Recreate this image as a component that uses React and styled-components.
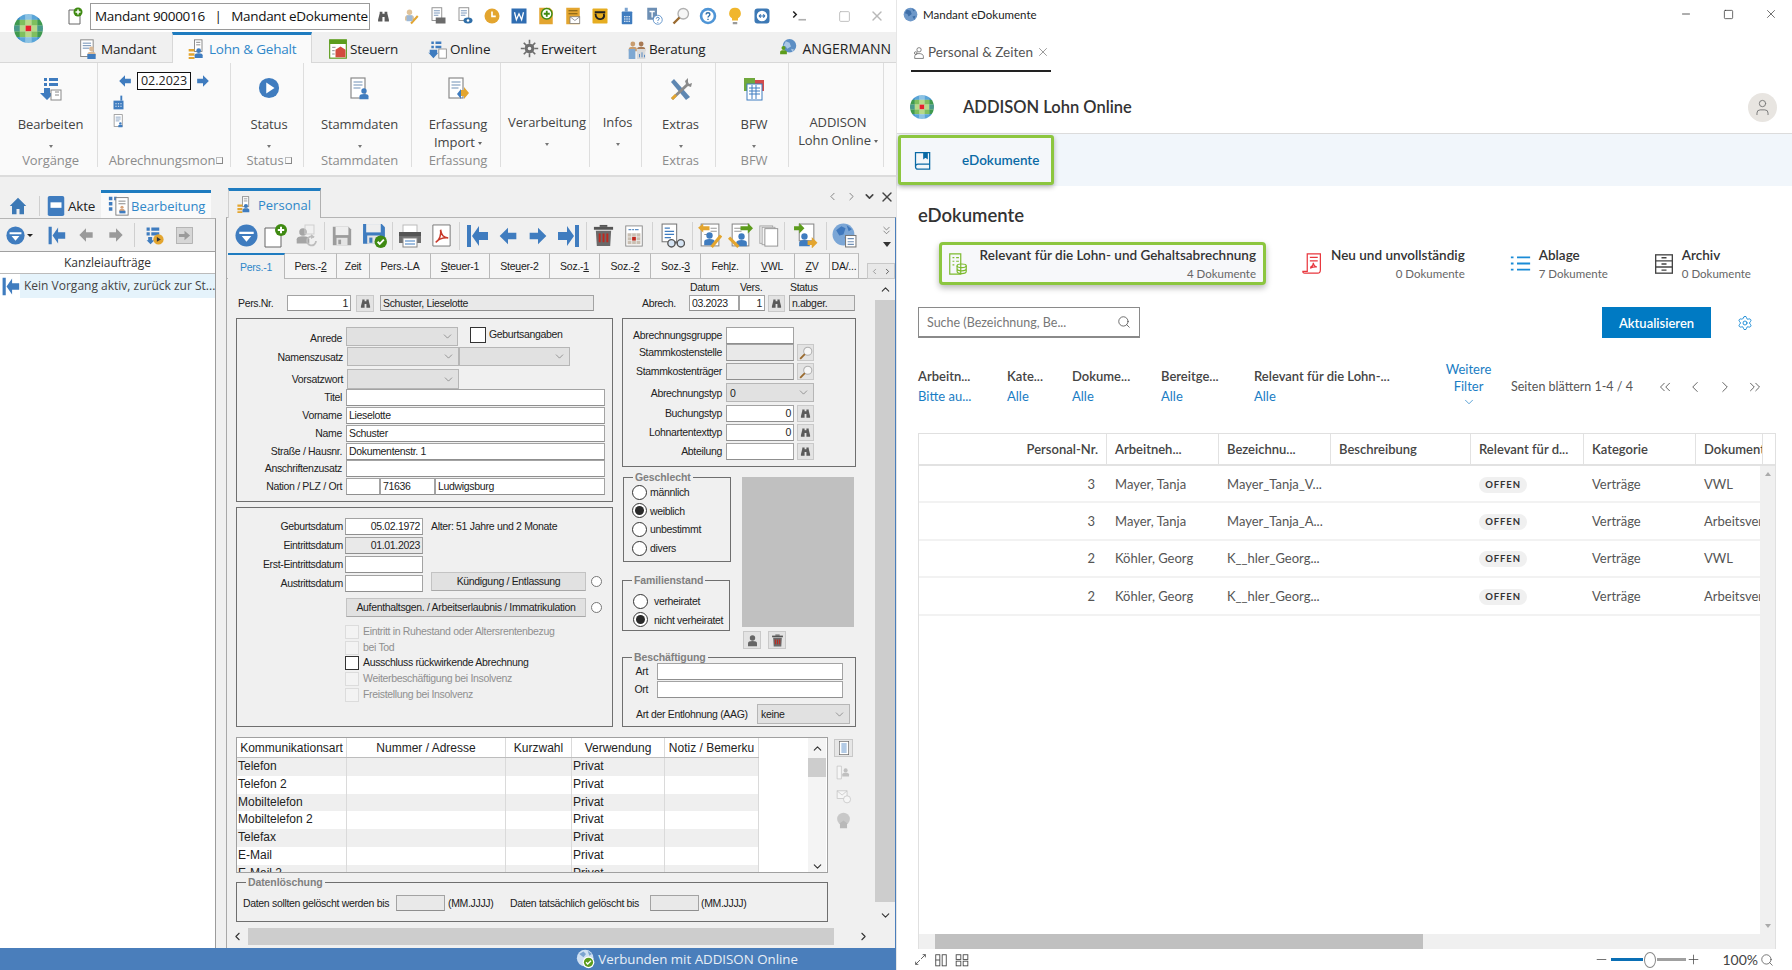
import React, { useId } from 'react';
import styled, { createGlobalStyle } from 'styled-components';
import { Search, Settings, ChevronsLeft, ChevronsRight, ChevronLeft, ChevronRight, ChevronDown, ChevronUp, ChevronsDown, X, User, Minus, Square, Plus } from 'lucide-react';

const seg = `"Open Sans","Noto Sans",sans-serif`;
const ms = `"Liberation Sans",Arial,sans-serif`;
const fira = `Lato,"Noto Sans",sans-serif`;
const B = '#3f7cbf', G = '#9a9a9a', O = '#e3a52f', GR = '#3f8a12';

const Global = createGlobalStyle`
  html, body { margin: 0; padding: 0; background: #fff; overflow: hidden; }
  * { box-sizing: border-box; }
`;

/* ---------- icons ---------- */
const Pers = ({ x = 12, y = 10, c = B, s = 1 }) => (
  <g transform={`translate(${x} ${y}) scale(${s})`}>
    <circle cx="0" cy="0" r="3.6" fill={c} />
    <path d="M-6 11V7c0-2 2-3 6-3s6 1 6 3v4z" fill={c} />
  </g>
);
const Doc = ({ x = 4, y = 1, w = 14, h = 20, c = '#8a8a8a' }) => (
  <g>
    <rect x={x} y={y} width={w} height={h} fill="#fff" stroke={c} strokeWidth="1.2" />
    <path d={`M${x + 2.5} ${y + 4}h${w - 5}M${x + 2.5} ${y + 7}h${w - 5}M${x + 2.5} ${y + 10}h${w - 7}`} stroke="#6f8fb5" strokeWidth="1.2" />
  </g>
);
const Floppy = ({ c, slot }) => (
  <g>
    <path d="M2 2h17l3 3v17H2z" fill={c} />
    <rect x="5" y="2" width="14" height="9" fill="#eeeeee" />
    <rect x="6" y="14" width="12" height="8" fill="#e4e4e4" />
    <rect x="8" y="16" width="3" height="5" fill={slot} />
  </g>
);
const ICONS = {
  binoc: <path fill="#5a5a5a" d="M5 3h5v4h4V3h5v3l3 12v3h-8v-8h-4v8H2v-3L5 6z" />,
  personEdit: <g><Pers x={10} y={7} c="#e0c39a" /><path d="M11 21l9-10 2 2-9 10z" fill={O} /><path d="M6 11h8v8H6z" fill="#9db8d6" /></g>,
  docPrint: <g><Doc x={4} y={1} w={13} h={17} /><rect x="9" y="14" width="13" height="8" fill="#6b6b6b" /></g>,
  docEye: <g><Doc x={4} y={1} w={13} h={17} /><ellipse cx="16" cy="18" rx="6" ry="4" fill="#2f6ea8" /><circle cx="16" cy="18" r="1.7" fill="#fff" /></g>,
  clock: <g><circle cx="12" cy="12" r="10" fill={O} /><path d="M12 6v6.500h5" stroke="#fff" strokeWidth="2.2" fill="none" /></g>,
  word: <g><rect x="2" y="2" width="20" height="20" fill="#2f6db2" /><path d="M6 7l2.500 10L12 9l3.500 8L18 7" stroke="#fff" strokeWidth="1.7" fill="none" /></g>,
  notePlus: <g><path d="M3 1h14l4 4v18H3z" fill={O} /><circle cx="13" cy="9" r="7" fill="#fff" stroke={GR} strokeWidth="2" /><path d="M13 5v8M9 9h8" stroke={GR} strokeWidth="2.4" /></g>,
  noteMail: <g><rect x="3" y="1" width="18" height="22" fill={O} /><path d="M6 5h12M6 9h12" stroke="#7a5a10" strokeWidth="1.4" /><rect x="8" y="13" width="13" height="9" fill="#fff" stroke="#777" /><path d="M8 13l6.500 5 6.500-5" fill="none" stroke="#777" /></g>,
  post: <g><rect x="2" y="2" width="20" height="20" rx="1" fill="#e6ad21" /><path d="M6 9c0 6 4 8 8 7 3-1 4-4 3-7M5 7h14" stroke="#222" strokeWidth="2.4" fill="none" /></g>,
  calc: <g><path d="M9 1h4v5h-4z" fill="#7ba3cf" /><rect x="5" y="6" width="14" height="17" rx="1" fill={B} /><path d="M8 13h2M11 13h2M14 13h2M8 16h2M11 16h2M14 16h2M8 19h2M11 19h2M14 19h2" stroke="#fff" strokeWidth="1.6" /></g>,
  helpDoc: <g><rect x="3" y="1" width="13" height="16" fill="#6d8fb4" /><path d="M6 6h7M9.500 6v8" stroke="#fff" strokeWidth="1.8" /><circle cx="17" cy="17" r="6" fill="#fff" stroke={B} /><path d="M15 15.500c0-2.400 4-2.400 4 0 0 1.500-2 1.400-2 3M17 20v1" stroke={B} strokeWidth="1.3" fill="none" /></g>,
  mag: <g><circle cx="15" cy="9" r="7" fill="#f6f6f6" stroke="#b0b0b0" strokeWidth="1.8" /><path d="M10 14l-8 8" stroke="#9a6a2f" strokeWidth="3.2" /></g>,
  helpCircle: <g><circle cx="12" cy="12" r="11" fill="#4f95d6" /><circle cx="12" cy="12" r="7.500" fill="#fff" /><path d="M9.500 10c0-3.200 5-3.200 5 0 0 2-2.500 2-2.500 4M12 15.500v1.800" stroke="#2f6ea8" strokeWidth="1.8" fill="none" /></g>,
  bulb: <g><path d="M12 1a7.500 7.500 0 0 0-4 14v3h8v-3a7.500 7.500 0 0 0-4-14z" fill="#f0b62c" /><path d="M9 20h6v3H9z" fill="#9a9a9a" /></g>,
  tv: <g><rect x="2" y="2" width="20" height="20" rx="4" fill="#3d79b5" /><circle cx="12" cy="12" r="7" fill="#fff" /><path d="M8 12h8M8 12l2.500-2.200M8 12l2.500 2.200M16 12l-2.500-2.200M16 12l-2.500 2.200" stroke="#3d79b5" strokeWidth="1.5" fill="none" /></g>,
  cmd: <g><path d="M3 6l4 4-4 4" stroke="#222" strokeWidth="2" fill="none" /><path d="M10 17h10" stroke="#b0b0b0" strokeWidth="2.2" /></g>,
  mandant: <g><Doc x={2} y={1} w={15} h={20} /><Pers x={15} y={12} c="#d8b896" s={0.8} /><path d="M10 24v-6h10v6z" fill={B} /></g>,
  lohn: <g><rect x="9" y="1" width="9" height="14" fill="#fff" stroke="#777" /><path d="M11 4h5M11 7h5" stroke="#777" /><path d="M2 12h7v3H2zM2 17h7v3H2zM2 21.500h7V24H2z" fill={O} /><Pers x={14} y={14} c={B} s={0.8} /></g>,
  steuern: <g><rect x="2" y="1" width="20" height="22" fill="#fff" stroke="#5c9c1c" strokeWidth="1.4" /><rect x="2" y="1" width="20" height="5" fill="#5c9c1c" /><path d="M9 13l6-4 6 4v9H9z" fill="#d24b3e" /><path d="M5 10h4M5 14h3M5 18h3" stroke="#777" /></g>,
  online: <g><path d="M4 3h3v3H4zM4 8h3v3H4zM9 3h7v3H9zM9 8h7v3H9z" fill={B} /><path d="M2 13h9v4l2-1-6.500 7L0 16l2 1z" fill={B} /><rect x="13" y="12" width="9" height="11" fill="#fff" stroke="#888" /></g>,
  gear: <g fill="#6e6e6e"><circle cx="12" cy="12" r="4.200" fill="none" stroke="#6e6e6e" strokeWidth="3.800" /><path d="M11 1h2v5h-2zM11 18h2v5h-2zM1 11h5v2H1zM18 11h5v2h-5zM4 5.500L5.500 4l3.500 3.500L7.500 9zM15 16.500l1.500-1.500 3.500 3.500-1.500 1.500zM4 18.500L7.500 15 9 16.500 5.500 20zM15 7.500L18.500 4 20 5.500 16.500 9z" /></g>,
  berat: <g><Pers x={7} y={6} c="#c99c6e" s={0.8} /><Pers x={17} y={6} c="#a87a55" s={0.8} /><path d="M2 12h8v12H2z" fill="#7ea8d2" /><path d="M12 12h10v12H12z" fill="#dadada" /><path d="M15 22v-4M18 22v-6M21 22v-3" stroke={B} /></g>,
  angerm: <g><circle cx="14" cy="9" r="9" fill="#5d8fc4" /><path d="M9 3l5 2 2 5-5 3-2-3-3-1zM16 13l4 1-2 4z" fill="#a9c6e4" /><Pers x={6} y={12} c="#5c9c1c" s={0.75} /></g>,
  globe: <g><circle cx="12" cy="12" r="11" fill="#6e98c9" /><path d="M6 4l6 2 2 5-5 4-2-4-4-1zM15 15l5-1-2 6zM14 2l5 3-2 2z" fill="#3d6ea8" /></g>,
  listDown: <g><path d="M5 1h3v3H5zM10 1h9v3h-9zM5 6h3v3H5zM10 6h9v3h-9z" fill={B} /><path d="M5 11h6v5h4l-7 7-7-7h4z" fill={B} /><rect x="12" y="13" width="10" height="10" fill="#fff" stroke="#888" /><path d="M16 15h4M16 18h4" stroke="#888" /></g>,
  play: <g><circle cx="12" cy="12" r="11" fill={B} /><path d="M9 6l9 6-9 6z" fill="#fff" /></g>,
  stamm: <g><Doc x={3} y={1} w={14} h={20} /><Pers x={16} y={14} c={B} s={0.75} /></g>,
  erfass: <g><Doc x={3} y={1} w={14} h={20} /><path d="M9 15h6v-3l-4 5 4 5v-3h3v-4z" fill={B} /><path d="M15 13h3v-3l5 6-5 6v-3h-3z" fill={O} /></g>,
  tools: <g><path d="M5 2l-3 3 15 18 4-3z" fill="#5e87b2" /><path d="M19 1l-3 3 1 3L2 21l2 2L19 9l3 1 1-4-3 1-1-2z" fill="#8a8a8a" /><path d="M2 21l4-4 2 2-4 4z" fill={O} /></g>,
  bfw: <g><rect x="2" y="1" width="11" height="13" fill="#70a83c" /><rect x="13" y="3" width="9" height="11" fill="#d34b4b" /><rect x="5" y="7" width="15" height="16" fill="#fff" stroke={B} /><path d="M7 11h11M7 14h11M7 17h11M10 8v14M14 8v14" stroke={B} /></g>,
  small1: <g><path d="M15 1h3v8h-3z" fill={B} /><rect x="4" y="9" width="16" height="14" fill={B} /><path d="M7 14h2M11 14h2M15 14h2M7 18h2M11 18h2M15 18h2" stroke="#fff" strokeWidth="1.4" /></g>,
  small2: <g><Doc x={5} y={1} w={13} h={19} /><Pers x={15} y={15} c={B} s={0.55} /></g>,
  home: <path d="M12 1L1 12h3v11h6v-7h4v7h6V12h3z" fill="#3d79b5" />,
  akte: <g><rect x="3" y="1" width="18" height="22" rx="2" fill={B} /><rect x="6" y="8" width="12" height="6" fill="#fff" /></g>,
  bearb: <g><path d="M1 2h4v4H1zM7 2h3v4H7zM1 8h4v4H1zM1 14h4v4H1z" fill={B} /><rect x="9" y="3" width="14" height="20" fill="#fff" stroke="#777" /><path d="M12 7h8M12 10h8" stroke="#777" /><Pers x={16} y={14} c="#d8a37a" s={0.5} /><rect x="13" y="18" width="7" height="3" fill={B} /></g>,
  filter: <g><circle cx="12" cy="12" r="11.500" fill={B} /><path d="M4.500 8h15v2.500h-15zM7 12.500h10l-5 6z" fill="#fff" /></g>,
  first: <path d="M2 1h4v22H2zM23 8h-9V2L7 12l7 10v-6h9z" fill={B} />,
  left: c => <path d="M22 8H12V2L2 12l10 10v-6h10z" fill={c} />,
  right: c => <path d="M2 8h10V2l10 10-10 10v-6H2z" fill={c} />,
  last: <path d="M22 1h-4v22h4zM1 8h9V2l7 10-7 10v-6H1z" fill={B} />,
  listPlay: <g><path d="M2 2h4v4H2zM8 2h10v4H8zM2 8h4v4H2zM8 8h10v4H8z" fill={B} /><path d="M4 14h5v4h3l-5 5-5-5h2z" fill={B} /><circle cx="17" cy="17" r="6.500" fill={O} /><path d="M15 14l5 3-5 3z" fill="#333" /></g>,
  grayBox: <g><rect x="2" y="2" width="20" height="20" fill="#d6d6d6" stroke="#a8a8a8" /><path d="M5 10h7V6l7 6-7 6v-4H5z" fill="#9a9a9a" /></g>,
  docPlus: <g><path d="M2 4h16v19H2z" fill="#fff" stroke="#666" /><circle cx="18" cy="6" r="6" fill={GR} /><path d="M18 2.800v6.400M14.800 6h6.400" stroke="#fff" strokeWidth="2" /></g>,
  persUndo: <g><Pers x={9} y={8} c="#a5a5a5" s={1.05} /><path d="M22 17a4.500 4.500 0 1 1-2-3.800" fill="none" stroke="#bdbdbd" strokeWidth="1.800" /><path d="M17 10l3.500 3-3.500 2z" fill="#bdbdbd" /><rect x="11" y="1" width="9" height="9" fill="none" stroke="#cfcfcf" /></g>,
  save: c => <Floppy c={c} slot={c} />,
  saveOk: <g><path d="M1 1h18l3 3v16H1z" fill={B} /><rect x="4" y="1" width="14" height="8" fill="#eeeeee" /><rect x="5" y="12" width="12" height="8" fill="#e4e4e4" /><rect x="7" y="14" width="3" height="5" fill={B} /><circle cx="18" cy="18" r="6" fill={GR} /><path d="M15 18l2 2 4-4" stroke="#fff" strokeWidth="1.800" fill="none" /></g>,
  print: <g><rect x="5" y="1" width="14" height="8" fill="#fff" stroke="#bbb" /><path d="M1 8h22v11H1z" fill="#6f6f6f" /><path d="M1 8h22v4H1z" fill="#555" /><rect x="5" y="14" width="14" height="9" fill="#fff" stroke="#888" /><path d="M7 17h10M7 20h10" stroke={B} /></g>,
  pdf: <g><path d="M3 1h18v22H3z" fill="#fff" stroke="#777" /><path d="M6 19c4-2 6-8 5-13 1 6 3 8 8 8.500-5-.5-9 .5-13 4.500z" fill="none" stroke="#c8392b" strokeWidth="1.600" /></g>,
  trash: <g><rect x="2" y="3" width="20" height="3" fill="#555" /><rect x="8" y="1" width="8" height="2" fill="#555" /><path d="M4 7h16l-1 16H5z" fill="#6a6a6a" /><path d="M8 10v9M12 10v9M16 10v9" stroke="#c0281e" strokeWidth="2" /></g>,
  cal: <g><rect x="3" y="1" width="18" height="22" fill="#fff" stroke="#888" /><path d="M6 5h3M10 5h2M13 5h4" stroke="#5d8fc4" strokeWidth="1.300" /><rect x="5" y="9" width="14" height="12" fill="#c9bfb2" /><path d="M5 13h14M5 17h14M9.500 9v12M14.500 9v12" stroke="#f2f2f2" strokeWidth=".8" /><rect x="10" y="13" width="4" height="4" fill="#c0281e" /></g>,
  docGlass: <g><rect x="2" y="1" width="14" height="17" fill="#fff" stroke="#777" /><path d="M4.500 5h5M4.500 8h9M4.500 11h9M4.500 14h6" stroke={B} strokeWidth="1.200" /><circle cx="11" cy="19.500" r="3.500" fill="#d6e4f3" stroke="#555" strokeWidth="1.300" /><circle cx="20" cy="19.500" r="3.500" fill="#d6e4f3" stroke="#555" strokeWidth="1.300" /><path d="M14 19h3" stroke="#555" strokeWidth="1.200" /></g>,
  pa: <g><rect x="4" y="1" width="17" height="21" fill="#fff" stroke="#888" /><path d="M13 5h6M13 8h6M7 11h4" stroke="#999" /><path d="M1 4.500l5-4v2.500h6v4H6v2z" fill={O} /><Pers x={12} y={12} c={B} s={0.85} /><path d="M14 23l9-11" stroke={O} strokeWidth="3" /></g>,
  pb: <g><rect x="4" y="1" width="16" height="21" fill="#fff" stroke="#888" /><path d="M6 5h7M6 8h7" stroke="#999" /><path d="M12 3h7V0l5 5-5 5V7h-7z" fill="#5c9c1c" /><Pers x={13} y={13} c={B} s={0.85} /><path d="M1 14l9 9" stroke={O} strokeWidth="3" /></g>,
  pages: <g><rect x="2" y="1" width="14" height="19" fill="#efefef" stroke="#a5a5a5" /><rect x="4.500" y="2.500" width="14" height="19" fill="#f4f4f4" stroke="#a5a5a5" /><rect x="7.500" y="4" width="14" height="19" fill="#fff" stroke="#8f8f8f" /></g>,
  pd: <g><rect x="6" y="1" width="14" height="16" fill="#fff" stroke="#888" /><path d="M1 3h5V0l5 5-5 5V7H1z" fill="#5c9c1c" /><Pers x={11} y={13} c={B} s={0.85} /><path d="M14 17h4v-3.500l5.500 5.500-5.500 5.500V21h-4z" fill={O} /></g>,
  globeDoc: <g><circle cx="11" cy="11" r="10.500" fill="#7ba6d6" /><path d="M4 7l5-4 4 2-2 6-4 1zM14 2l5 4-3 2zM12 14l4-1-2 6z" fill="#3f78bd" /><rect x="13" y="12" width="10" height="11" fill="#fff" stroke="#777" /><path d="M15 15h6M15 18h6M15 20.500h6" stroke="#6f8fb5" /></g>,
  personBtn: <Pers x={12} y={8} c="#666" s={1.2} />,
  listBtn: <g><rect x="5" y="2" width="14" height="20" fill="#fff" stroke="#666" /><path d="M8 6h8M8 9h8M8 12h8M8 15h8M8 18h8" stroke={B} strokeWidth="1.200" /></g>,
  sideB: <g opacity="0.45"><path d="M3 3h6v18H3z" fill="#fff" stroke="#888" /><Pers x={15} y={9} c="#888" s={0.8} /></g>,
  sideC: <g opacity="0.45"><rect x="3" y="4" width="14" height="11" fill="#fff" stroke="#888" /><path d="M3 4l7 6 7-6" fill="none" stroke="#888" /><circle cx="17" cy="16" r="5" fill="#fff" stroke="#888" /></g>,
  sideD: <g opacity="0.45"><circle cx="12" cy="10" r="9" fill="#999" /><path d="M7 23v-7l5-4 5 4v7z" fill="#777" /></g>,
  verb: <g><circle cx="11" cy="11" r="10" fill="#cfe0f2" /><path d="M4 6l5-3 3 3-3 4zM14 2l5 4-3 2z" fill="#7ba3cf" /><circle cx="15" cy="16" r="7" fill="#fff" /><circle cx="15" cy="16" r="5.500" fill="#5c9c1c" /><path d="M12 16l2 2 4-4" stroke="#fff" strokeWidth="1.600" fill="none" /></g>,
  book: <g fill="none" stroke="#0a6aa5" strokeWidth="1.500"><path d="M3 20V3h17v20H6a3 3 0 0 1-3-3c0-2 1-3 3-3h14" /><path d="M13 3v7l2-1.500 2 1.500V3" fill="#0a6aa5" /></g>,
  relDoc: <g fill="none" stroke="#7dba2f" strokeWidth="1.300"><path d="M3 1h12v22H3z" /><path d="M6 5h2M10 5h3M6 9h2M10 9h3M6 13h2" /><ellipse cx="16" cy="14" rx="5" ry="2" /><path d="M11 14v6c0 1.500 2 2.500 5 2.500s5-1 5-2.500v-6M11 17c0 1.500 2 2.500 5 2.500s5-1 5-2.500" /></g>,
  newDoc: <g fill="none" stroke="#e8363d" strokeWidth="1.400"><path d="M6 21V1h15v18c0 3-1 4-3 4H3c-1.500 0-2-1-2-2z" /><path d="M9 5h9M9 9h9" /><path d="M10 16c2-1 3-3 3-5 0 3 1 4 4 5-3-.2-5 0-7 1z" /></g>,
  ablage: <g fill="none" stroke="#1a8bd6" strokeWidth="2.200"><path d="M8 5h15M8 12h15M8 19h15" /><path d="M1 5h3M1 12h3M1 19h3" /></g>,
  archiv: <g fill="none" stroke="#444" strokeWidth="1.600"><rect x="2" y="1" width="20" height="22" /><path d="M2 8.300h20M2 15.600h20M9 4.500h6M9 12h6M9 19.300h6" /></g>,
  persZeit: <g fill="none" stroke="#555" strokeWidth="1.300"><circle cx="13" cy="7" r="4" /><path d="M5 23v-4c0-3 3-5 8-5s8 2 8 5v4z" /><circle cx="7" cy="13" r="2.500" /></g>,
  expand: <g fill="none" stroke="#444" strokeWidth="1.500"><path d="M13 11l8-8M16 3h5v5M11 13l-8 8M3 16v5h5" /></g>,
  split: <g fill="none" stroke="#444" strokeWidth="1.500"><rect x="2" y="3" width="8" height="8" /><rect x="14" y="3" width="8" height="8" /><rect x="2" y="14" width="8" height="8" /><rect x="14" y="14" width="8" height="8" /></g>,
  split2: <g fill="none" stroke="#444" strokeWidth="1.500"><rect x="3" y="3" width="7" height="19" /><rect x="14" y="3" width="7" height="19" /><path d="M3 12h7" /></g>,
};
const Ico = ({ n, c, s = 20, h }) => {
  const v = ICONS[n];
  return <svg width={s} height={h || s} viewBox="0 0 24 24" style={{ flex: 'none' }}>{typeof v === 'function' ? v(c) : v}</svg>;
};
const TILES = [
  ['#2f86c8', '#5aa5d8', '#8cc3e4', '#5aa5d8', '#2f86c8'],
  ['#3f9a4f', '#7fbf5e', '#b8d98a', '#7fbf5e', '#3f9a4f'],
  ['#4a9a8a', '#b8d98a', '#e5202e', '#b8d98a', '#4a9a8a'],
  ['#3f9a4f', '#7fbf5e', '#b8d98a', '#7fbf5e', '#3f9a4f'],
  ['#2f86c8', '#5aa5d8', '#8cc3e4', '#5aa5d8', '#2f86c8'],
];
const Logo = ({ s }) => {
  const id = useId();
  return (
    <svg width={s} height={s} viewBox="0 0 24 24">
      <defs><clipPath id={id}><circle cx="12" cy="12" r="12" /></clipPath></defs>
      <g clipPath={`url(#${id})`}>
        {TILES.map((row, y) => row.map((c, x) => <rect key={`${x}-${y}`} x={x * 4.8} y={y * 4.8} width="4.900" height="4.900" fill={c} />))}
      </g>
    </svg>
  );
};

/* ---------- page ---------- */
const Page = styled.div`display:flex;width:1792px;height:970px;overflow:hidden;background:#fff;`;
const LeftWin = styled.div`position:relative;width:896px;height:970px;display:flex;flex-direction:column;background:#f0f0f0;font-family:${seg};`;
const RightWin = styled.div`width:896px;height:970px;display:flex;flex-direction:column;background:#fff;font-family:${fira};color:#333;border-left:1px solid #e6e6e6;`;
const LogoWrap = styled.div`position:absolute;left:14px;top:14px;width:29px;height:29px;`;

/* title bar */
const TitleBar = styled.div`height:32px;background:#fff;display:flex;align-items:center;padding-left:68px;`;
const MandInput = styled.div`width:280px;height:27px;margin-left:7px;border:1px solid #9a9a9a;background:#fff;font-size:13.5px;letter-spacing:-.3px;line-height:25px;padding-left:4px;white-space:pre;overflow:hidden;color:#111;`;
const TbSlot = styled.div`width:${p => p.$w || 27}px;height:24px;margin-left:${p => p.$ml || 0}px;display:flex;align-items:center;justify-content:center;flex:none;`;
const WinBtn = styled.div`margin-left:${p => p.$ml}px;width:18px;height:18px;display:flex;align-items:center;justify-content:center;flex:none;color:#b8b8b8;`;

/* menu tabs */
const MenuBar = styled.div`height:31px;display:flex;align-items:stretch;padding-left:63px;background:#f0f0f0;border-bottom:1px solid #d8d8d8;`;
const MenuTab = styled.div`width:${p => p.$w}px;display:flex;align-items:center;gap:2px;padding-left:${p => p.$pl || 16}px;font-size:13.5px;letter-spacing:-.2px;white-space:nowrap;
  color:${p => p.$on ? '#2f87c9' : '#222'};background:${p => p.$on ? '#fafafa' : 'transparent'};border-top:${p => p.$on ? '3px solid #1f7cc0' : '3px solid transparent'};
  ${p => p.$on ? 'border-left:1px solid #d8d8d8;border-right:1px solid #d8d8d8;margin-bottom:-1px;' : ''}`;
const MenuRight = styled.div`margin-left:auto;display:flex;align-items:center;gap:5px;padding-right:5px;font-size:14px;color:#222;white-space:nowrap;padding-top:2px;`;

/* ribbon */
const Ribbon = styled.div`height:114px;background:#fafafa;display:flex;border-bottom:2px solid #dcdcdc;`;
const RGroup = styled.div`width:${p => p.$w}px;flex:none;display:grid;grid-template-rows:39px 18px 18px 16px;justify-items:center;padding:14px 0 0 4px;height:104px;
  border-right:1px solid #dedede;`;
const RIcon = styled.div`height:39px;display:flex;justify-content:center;align-items:flex-start;`;
const RLabel = styled.div`font-size:13px;line-height:16px;letter-spacing:-.1px;color:#444;text-align:center;white-space:nowrap;${p => p.$up ? 'transform:translateY(-2px);' : ''}`;
const RArrow = styled.div`width:0;height:0;border-left:2.5px solid transparent;border-right:2.5px solid transparent;border-top:3px solid #777;align-self:center;margin-top:${p => p.$mt || 6}px;`;
const LabelCaret = styled.span`display:inline-block;width:0;height:0;border-left:2.5px solid transparent;border-right:2.5px solid transparent;border-top:3px solid #666;margin-left:3px;vertical-align:middle;`;
const RCaption = styled.div`font-size:13px;line-height:16px;letter-spacing:-.1px;color:#8c8c8c;white-space:nowrap;display:flex;align-items:center;gap:1px;`;
const Launcher = styled.span`display:inline-block;width:7px;height:7px;border:1px solid #888;border-top-color:#bbb;border-left-color:#bbb;flex:none;`;
const MonthCol = styled.div`display:flex;flex-direction:column;align-items:flex-start;padding-left:9px;width:100%;gap:5px;height:59px;grid-row:1 / span 3;`;
const MonthRow = styled.div`display:flex;align-items:center;gap:5px;margin-top:-5px;margin-left:7px;`;
const MonthInput = styled.div`width:54px;height:18px;border:1px solid #111;background:#fff;font-size:12.5px;line-height:16px;text-align:center;color:#222;`;
const SmallStack = styled.div`display:flex;flex-direction:column;gap:4px;`;

/* main */
const Body = styled.div`flex:1;display:flex;min-height:0;background:#f0f0f0;`;
const Side = styled.div`width:216px;flex:none;padding-top:13px;display:flex;flex-direction:column;`;
const SideTabs = styled.div`height:28px;display:flex;align-items:flex-end;padding-left:9px;flex:none;`;
const SideItem = styled.div`display:flex;align-items:center;gap:1px;font-size:13.5px;letter-spacing:-.2px;height:24px;color:#222;width:${p => p.$w}px;margin-left:${p => p.$ml || 0}px;flex:none;`;
const VSep = styled.div`width:1px;height:${p => p.$h || 24}px;background:#cfcfcf;margin:0 ${p => p.$m ?? 0}px ${p => p.$mb || 0}px ${p => p.$ml ?? p.$m ?? 0}px;flex:none;`;
const SideActive = styled.div`width:110px;height:28px;margin-left:5px;background:#fafafa;border-top:3px solid #1f7cc0;display:flex;align-items:center;gap:2px;padding-left:7px;font-size:13px;color:#2f87c9;white-space:nowrap;flex:none;`;
const SideBox = styled.div`flex:1;display:flex;flex-direction:column;border-top:1px solid #b5b5b5;border-right:1px solid #9c9c9c;background:#fff;`;
const SideBar = styled.div`height:33px;background:#f0f0f0;display:flex;align-items:center;padding-left:6px;flex:none;border-bottom:1px solid #a0a0a0;`;
const Caret = styled.span`width:0;height:0;border-left:3px solid transparent;border-right:3px solid transparent;border-top:3px solid #222;margin-left:2px;flex:none;`;
const KHead = styled.div`height:22px;line-height:21px;text-align:center;font-size:12px;color:#333;border-bottom:1px solid #bbb;flex:none;`;
const KRow = styled.div`height:24px;display:flex;align-items:center;font-size:12px;color:#444;flex:none;white-space:nowrap;`;
const KText = styled.div`background:#e5f3fb;height:24px;line-height:24px;flex:1;padding-left:4px;overflow:hidden;`;
const KIcon = styled.div`width:20px;padding-left:1px;flex:none;display:flex;`;

const Main = styled.div`width:670px;margin-left:10px;flex:none;display:flex;flex-direction:column;`;
const PTabs = styled.div`height:40px;padding-top:11px;display:flex;align-items:stretch;flex:none;`;
const PTab = styled.div`width:93px;margin-left:2px;background:#f0f0f0;border-top:3px solid #1f7cc0;border-right:1px solid #b0b0b0;border-left:1px solid #d0d0d0;display:flex;align-items:center;gap:5px;padding-left:7px;font-size:13px;color:#2f87c9;margin-bottom:-1px;position:relative;z-index:1;`;
const PNav = styled.div`margin-left:auto;display:flex;align-items:center;height:17px;`;
const NavTri = styled.div`width:${p => p.$w}px;display:flex;justify-content:center;color:#666;`;
const MainInner = styled.div`flex:1;min-height:0;display:flex;flex-direction:column;border-left:1px solid #a8a8a8;border-top:1px solid #b5b5b5;border-right:1px solid #4a7ebb;`;
const Tools = styled.div`height:35px;display:flex;align-items:center;padding-left:6px;flex:none;`;
const TSep = styled.div`width:4px;height:28px;display:flex;justify-content:center;flex:none;&::after{content:'';width:1px;background:#d2d2d2;}`;
const ToolRight = styled.div`margin-left:auto;display:flex;flex-direction:column;align-items:center;padding-right:1px;width:16px;color:#555;`;
const SmallDown = styled.div`width:0;height:0;border-left:4px solid transparent;border-right:4px solid transparent;border-top:5px solid #333;margin-top:5px;`;
const FTabs = styled.div`height:26px;display:flex;align-items:stretch;flex:none;padding-left:1px;border-bottom:1px solid #b8b8b8;font-family:${ms};font-size:10.5px;letter-spacing:-.25px;`;
const FTab = styled.div`width:${p => p.$w}px;display:flex;align-items:center;justify-content:center;flex:none;color:${p => p.$on ? '#2f87c9' : '#222'};white-space:nowrap;overflow:hidden;
  border-top:${p => p.$on ? '2px solid #1f7cc0' : '1px solid #c4c4c4'};border-right:1px solid #b8b8b8;background:${p => p.$on ? '#f0f0f0' : '#f5f5f5'};margin-bottom:${p => p.$on ? '-1px' : '0'};`;
const FTabScroll = styled.div`margin-left:8px;width:28px;height:16px;margin-top:10px;display:flex;border:1px solid #c8c8c8;background:#e8e8e8;color:#888;align-items:center;justify-content:space-around;`;
const MidRow = styled.div`flex:1;min-height:0;display:flex;`;
const FormBody = styled.div`width:648px;flex:none;padding-left:9px;padding-top:2px;font-family:${ms};font-size:10.5px;letter-spacing:-.33px;color:#222;overflow:hidden;`;
const VScroll = styled.div`width:20px;flex:none;display:flex;flex-direction:column;background:#f0f0f0;color:#333;`;
const VEnd = styled.div`height:${p => p.$h}px;display:flex;align-items:center;justify-content:center;flex:none;background:${p => p.$thumb ? '#cdcdcd' : 'transparent'};`;
const VThumb = styled.div`flex:1;background:#cdcdcd;`;
const HScroll = styled.div`height:20px;flex:none;display:flex;align-items:stretch;padding-bottom:3px;color:#333;`;
const HEnd = styled.div`width:${p => p.$w}px;display:flex;align-items:center;justify-content:center;flex:none;`;
const HThumb = styled.div`width:586px;background:#cdcdcd;flex:none;`;
const StatusL = styled.div`height:22px;background:#4a7ebb;display:flex;align-items:center;justify-content:flex-end;gap:2px;padding-right:98px;color:#e8eef6;font-size:13.3px;flex:none;`;

/* form parts */
const CapRow = styled.div`height:14px;display:flex;padding-left:454px;line-height:12px;`;
const Cap = styled.div`width:50px;`;
const HeadRow = styled.div`height:23px;display:flex;align-items:flex-start;`;
const Txt = styled.div`width:${p => p.$w ? p.$w + 'px' : 'auto'};margin-left:${p => p.$ml || 0}px;line-height:${p => p.$lh || 16}px;white-space:nowrap;flex:none;`;
const Field = styled.div`width:${p => p.$w}px;height:${p => p.$h || 17}px;margin-left:${p => p.$ml || 0}px;flex:none;line-height:${p => (p.$h || 17) - 2}px;padding:0 2px;white-space:nowrap;overflow:hidden;
  text-align:${p => p.$r ? 'right' : 'left'};background:${p => p.$grey ? '#e9e9e9' : '#fff'};border:1px solid #a3a3a3;border-bottom-color:#8f8f8f;`;
const IcoBtn = styled.div`width:${p => p.$w || 17}px;height:${p => p.$h || 17}px;margin-left:${p => p.$ml || 0}px;flex:none;background:#e3e3e3;border:1px solid #c9c9c9;display:flex;align-items:center;justify-content:center;`;
const Sel = styled.div`width:${p => p.$w}px;height:${p => p.$h || 19}px;flex:none;background:#e1e1e1;border:1px solid #b6b6b6;display:flex;align-items:center;justify-content:space-between;padding:0 3px;color:#222;`;
const Top = styled.div`display:flex;gap:9px;height:409px;margin-bottom:10px;`;
const Col = styled.div`width:${p => p.$w}px;flex:none;display:flex;flex-direction:column;`;
const Panel = styled.div`position:relative;height:${p => p.$h}px;width:${p => p.$w ? p.$w + 'px' : 'auto'};margin-top:${p => p.$mt || 0}px;margin-left:${p => p.$ml || 0}px;padding-top:${p => p.$pt || 0}px;border:1px solid #6f6f6f;flex:none;`;
const Legend = styled.div`position:absolute;left:${p => p.$l || 9}px;top:-7px;background:#f0f0f0;padding:0 2px;line-height:12px;color:#808080;font-weight:700;letter-spacing:-.1px;font-size:10.5px;`;
const Row = styled.div`height:${p => p.$h}px;display:flex;align-items:flex-start;`;
const Lab = styled.div`width:${p => p.$w}px;flex:none;text-align:right;white-space:nowrap;line-height:${p => p.$lh || 17}px;padding-right:${p => p.$pr ?? 4}px;display:flex;justify-content:flex-end;`;
const Check = styled.span`width:${p => p.$s || 14}px;height:${p => p.$s || 14}px;flex:none;background:${p => p.$dim ? '#f3f3f3' : '#fff'};border:1px solid ${p => p.$dim ? '#dcdcdc' : '#333'};display:block;margin-left:${p => p.$ml || 0}px;`;
const Radio = styled.span`width:${p => p.$s || 15}px;height:${p => p.$s || 15}px;border-radius:50%;border:1px solid ${p => p.$g ? '#777' : '#333'};background:#fff;flex:none;margin-left:${p => p.$ml || 0}px;display:flex;align-items:center;justify-content:center;
  &::after{content:'';width:9px;height:9px;border-radius:50%;background:${p => p.$on ? '#2a2a2a' : 'transparent'};}`;
const Btn = styled.div`width:${p => p.$w}px;height:19px;flex:none;background:#e1e1e1;border:1px solid #c3c3c3;border-bottom-color:#a8a8a8;text-align:center;line-height:17px;white-space:nowrap;`;
const DateSplit = styled.div`display:flex;`;
const DateLeft = styled.div`display:flex;flex-direction:column;`;
const DateRight = styled.div`margin-left:8px;height:73px;display:flex;flex-direction:column;justify-content:space-between;`;
const BtnLine = styled.div`display:flex;align-items:center;margin-top:${p => p.$mt || 0}px;margin-left:${p => p.$ml || 0}px;`;
const Checks = styled.div`margin-top:8px;margin-left:108px;display:flex;flex-direction:column;`;
const CheckLine = styled.div`height:${p => p.$h || 16}px;display:flex;gap:4px;color:${p => p.$dim ? '#8f8f8f' : '#222'};line-height:13px;`;
const MidSplit = styled.div`display:flex;margin-top:10px;height:172px;`;
const LeftStack = styled.div`width:120px;flex:none;display:flex;flex-direction:column;`;
const RadioLine = styled.div`height:18.6px;display:flex;align-items:center;gap:${p => p.$g || 3}px;padding-left:${p => p.$pl || 8}px;white-space:nowrap;`;
const PhotoCol = styled.div`display:flex;flex-direction:column;`;
const Photo = styled.div`width:112px;height:150px;background:#c0c0c0;`;
const PhotoBtns = styled.div`display:flex;gap:7px;margin-top:4px;padding-left:1px;`;
const BottomRow = styled.div`display:flex;gap:6px;`;
const GridBox = styled.div`width:592px;height:136px;background:#fff;border:1px solid #a0a0a0;display:flex;flex:none;overflow:hidden;font-size:12px;letter-spacing:0;`;
const GridMain = styled.div`flex:1;overflow:hidden;`;
const GridRow = styled.div`display:grid;grid-template-columns:110px 159px 66px 93px 94px;height:${p => p.$head ? 20 : 17.8}px;width:522px;background:${p => p.$head ? '#fff' : p.$alt ? '#efefef' : '#fff'};${p => p.$head ? 'border-bottom:1px solid #bdbdbd;' : ''}`;
const GCell = styled.div`border-right:1px solid #dadada;white-space:nowrap;overflow:hidden;line-height:${p => p.$head ? 20 : 17}px;padding-left:${p => p.$head ? 0 : 1}px;text-align:${p => p.$head ? 'center' : 'left'};`;
const GridScroll = styled.div`width:18px;flex:none;background:#f4f4f4;display:flex;flex-direction:column;color:#333;margin-right:1px;`;
const SideIcons = styled.div`display:flex;flex-direction:column;gap:6px;width:19px;padding-top:2px;`;
const SideIconBox = styled.div`width:19px;height:18px;display:flex;align-items:center;justify-content:center;background:${p => p.$on ? '#e6e6e6' : 'transparent'};border:${p => p.$on ? '1px solid #c8c8c8' : 'none'};`;
const DelBox = styled.div`position:relative;width:592px;height:40px;margin-top:9px;border:1px solid #6f6f6f;display:flex;align-items:center;padding-left:6px;padding-top:1px;`;

/* right window */
const RTitle = styled.div`height:28px;display:flex;align-items:center;padding:0 14px 0 6px;font-size:11.5px;color:#222;flex:none;white-space:nowrap;`;
const RTitleText = styled.div`margin-left:5px;`;
const RCtl = styled.div`margin-left:${p => p.$ml ? p.$ml + 'px' : 'auto'};width:14px;display:flex;justify-content:center;color:#333;`;
const RTabs = styled.div`height:44px;padding-left:14px;flex:none;display:flex;`;
const RTab = styled.div`width:140px;height:44px;border-bottom:2px solid #222;display:flex;align-items:center;justify-content:center;gap:3px;font-size:13.5px;color:#555;white-space:nowrap;padding-top:6px;`;
const RHead = styled.div`height:61px;display:flex;align-items:center;padding:9px 15px 0 13px;flex:none;`;
const RHeadTitle = styled.div`margin-left:29px;font-size:16.5px;font-weight:600;color:#333;`;
const Avatar = styled.div`margin-left:auto;width:29px;height:29px;border-radius:50%;background:#e8e5e1;display:flex;align-items:center;justify-content:center;color:#777;`;
const RNav = styled.div`height:53px;background:#f1f6fb;border-top:1px solid #dcdcdc;padding:1px 0 0 1px;flex:none;`;
const RNavItem = styled.div`width:156px;height:50px;border:3px solid #8cc63f;border-radius:3px;box-shadow:0 2px 5px rgba(0,0,0,.3);background:#f4f7fa;display:flex;align-items:center;padding-left:12px;gap:29px;font-size:13.5px;font-weight:600;color:#0a6aa5;`;
const RBody = styled.div`flex:1;min-height:0;display:flex;flex-direction:column;padding-left:21px;`;
const H2 = styled.div`margin-top:19px;height:20px;line-height:20px;font-size:18.5px;font-weight:600;color:#333;flex:none;`;
const Cards = styled.div`margin-top:17px;height:43px;display:flex;flex:none;`;
const Card = styled.div`margin-left:${p => p.$ml || 0}px;width:${p => p.$w ? p.$w + 'px' : 'auto'};display:flex;align-items:center;flex:none;gap:${p => p.$g || 8}px;
  ${p => p.$hi ? 'border:3px solid #8cc63f;border-radius:4px;box-shadow:0 3px 6px rgba(0,0,0,.28);padding:0 7px 0 5px;background:#f7f8fa;justify-content:space-between;' : ''}`;
const CardText = styled.div`display:flex;flex-direction:column;align-items:${p => p.$left ? 'flex-start' : 'flex-end'};gap:3px;`;
const CardTitle = styled.div`font-size:13.5px;font-weight:600;line-height:17px;white-space:nowrap;color:#333;`;
const CardSub = styled.div`font-size:11.5px;line-height:14px;color:#666;white-space:nowrap;`;
const Tools2 = styled.div`margin-top:22px;height:31px;display:flex;align-items:center;flex:none;`;
const SearchBox = styled.div`width:222px;height:31px;border:1px solid #8a8a8a;border-bottom-width:2px;display:flex;align-items:center;justify-content:space-between;padding:0 8px;font-size:12.5px;color:#777;`;
const Primary = styled.div`margin-left:462px;width:109px;height:31px;background:#007ac3;color:#fff;font-size:13px;font-weight:600;display:flex;align-items:center;justify-content:center;`;
const GearWrap = styled.div`margin-left:26px;color:#1a8bd6;display:flex;`;
const Filters = styled.div`margin-top:23px;height:49px;display:flex;flex:none;`;
const FCol = styled.div`width:${p => p.$w}px;flex:none;padding-top:7px;white-space:nowrap;`;
const FLabel = styled.div`font-size:13px;font-weight:600;line-height:16px;color:#444;`;
const FVal = styled.div`font-size:13px;line-height:16px;margin-top:4px;color:#1a7dc4;`;
const More = styled.div`width:65px;flex:none;font-size:13px;line-height:17px;color:#1a7dc4;display:flex;flex-direction:column;align-items:flex-start;`;
const MoreLine = styled.div`width:45px;text-align:center;display:flex;justify-content:center;`;
const Pager = styled.div`display:flex;align-items:center;height:17px;margin-top:17px;font-size:12.5px;color:#555;white-space:nowrap;`;
const PagerText = styled.div`width:139px;`;
const PagerBtn = styled.div`width:30px;display:flex;justify-content:center;color:#555;`;
const Table = styled.div`margin-top:23px;flex:1;width:858px;min-height:0;border:1px solid #e0e0e0;border-bottom:0;display:flex;flex-direction:column;overflow:hidden;`;
const THead = styled.div`height:32px;display:flex;border-bottom:2px solid #e2e2e2;flex:none;font-size:13px;font-weight:600;color:#444;`;
const TH = styled.div`width:${p => p.$w}px;flex:none;padding:0 ${p => p.$r ? 8 : 0}px 0 ${p => p.$r ? 0 : 8}px;line-height:31px;border-right:1px solid #e2e2e2;white-space:nowrap;overflow:hidden;text-align:${p => p.$r ? 'right' : 'left'};`;
const TBodyWrap = styled.div`flex:1;min-height:0;display:flex;`;
const TBody = styled.div`flex:1;overflow:hidden;`;
const TR = styled.div`height:37.4px;display:flex;align-items:center;border-bottom:2px solid #f2f2f2;font-size:13px;color:#555;`;
const TD = styled.div`width:${p => p.$w}px;flex:none;padding:0 ${p => p.$r ? 12 : 0}px 0 ${p => p.$r ? 0 : 8}px;white-space:nowrap;overflow:hidden;text-align:${p => p.$r ? 'right' : 'left'};`;
const Badge = styled.span`display:inline-block;width:48px;height:16px;line-height:16px;border-radius:8px;background:#f0f0f0;text-align:center;font-size:9.5px;font-weight:700;letter-spacing:.9px;color:#333;`;
const TV = styled.div`width:15px;flex:none;background:#f0f0f0;display:flex;flex-direction:column;justify-content:space-between;align-items:center;padding:6px 0;`;
const Tri = styled.div`width:0;height:0;border-left:3px solid transparent;border-right:3px solid transparent;${p => p.$up ? 'border-bottom:4px solid #aaa;' : 'border-top:4px solid #aaa;'}`;
const TH2 = styled.div`height:15px;display:flex;align-items:stretch;background:#f0f0f0;flex:none;`;
const THThumb = styled.div`width:488px;margin-left:16px;background:#c0c0c0;`;
const RStatus = styled.div`height:21px;display:flex;align-items:center;padding-left:17px;gap:7px;flex:none;color:#444;margin-left:-21px;`;
const Slider = styled.div`margin-left:auto;display:flex;align-items:center;`;
const SlBar = styled.div`width:${p => p.$w}px;height:3px;margin-left:${p => p.$ml || 0}px;background:${p => p.$c};`;
const SlThumb = styled.div`width:12px;height:16px;border-radius:50%;border:1px solid #888;background:#fff;margin:0 1px;`;
const Zoom = styled.div`font-size:14px;margin:0 2px 0 21px;color:#444;`;
const SearchEnd = styled.div`margin-right:18px;display:flex;`;

const tools = [
  ['filter', 27, 23], ['docPlus', 30, 24], ['persUndo', 32, 24], 0,
  ['save', 32, 22, '#9c9c9c'], ['saveOk', 32, 25], 0,
  ['print', 32, 24], ['pdf', 31, 23], 0,
  ['first', 32, 24], ['left', 30, 20, B], ['right', 30, 20, B], ['last', 31, 24], 0,
  ['trash', 30, 23], ['cal', 32, 22], 0,
  ['docGlass', 36, 25], 0,
  ['pa', 30, 25], ['pb', 32, 25], ['pages', 26, 22], 0,
  ['pd', 38, 25], 0,
  ['globeDoc', 32, 25],
];
const ftabs = [
  [<>Pers.-1</>, 57, 1], [<>Pers.-<u>2</u></>, 52], [<>Zeit</>, 33], [<>Pers.-LA</>, 61], [<><u>S</u>teuer-1</>, 59], [<>Ste<u>u</u>er-2</>, 60],
  [<>Soz.-<u>1</u></>, 50], [<>Soz.-<u>2</u></>, 51], [<>Soz.-<u>3</u></>, 50], [<>Feh<u>l</u>z.</>, 49], [<><u>V</u>WL</>, 45], [<><u>Z</u>V</>, 35], [<>DA/...</>, 29],
];
const gridRows = ['Telefon', 'Telefon 2', 'Mobiltelefon', 'Mobiltelefon 2', 'Telefax', 'E-Mail', 'E-Mail 2'];
const cols = [188, 112, 112, 140, 113, 112];
const rows = [
  ['3', 'Mayer, Tanja', 'Mayer_Tanja_V...', 'VWL'],
  ['3', 'Mayer, Tanja', 'Mayer_Tanja_A...', 'Arbeitsvertrag'],
  ['2', 'Köhler, Georg', 'K__hler_Georg...', 'VWL'],
  ['2', 'Köhler, Georg', 'K__hler_Georg...', 'Arbeitsvertrag'],
];
const Chev = ({ c = '#555' }) => <ChevronDown size={13} strokeWidth={1} color={c} />;
const RGroupItem = ({ w, icon, label, cap, launcher, two, s = 24 }) => (
  <RGroup $w={w}>
    <RIcon><Ico n={icon} s={s} /></RIcon>
    <RLabel>{label}</RLabel>
    {two ? <RLabel>{two}</RLabel> : <RArrow />}
    {cap && <RCaption>{cap}{launcher && <Launcher />}</RCaption>}
  </RGroup>
);

export default function App() {
  return (
    <Page>
      <Global />
      <LeftWin>
        <LogoWrap><Logo s={29} /></LogoWrap>
        <TitleBar>
          <svg width="15" height="18" viewBox="0 0 15 18" style={{ flex: 'none' }}><path d="M1 3h11v14H1z" fill="#fff" stroke="#666" /><circle cx="10" cy="5" r="4.500" fill={GR} /><path d="M10 2.500v5M7.500 5h5" stroke="#fff" strokeWidth="1.500" /></svg>
          <MandInput>Mandant 9000016   |   Mandant eDokumente</MandInput>
          {['binoc', 'personEdit', 'docPrint', 'docEye', 'clock', 'word', 'notePlus', 'noteMail', 'post', 'calc', 'helpDoc', 'mag', 'helpCircle', 'bulb', 'tv'].map((n, i) => (
            <TbSlot key={i}><Ico n={n} s={n === 'binoc' ? 13 : 18} /></TbSlot>
          ))}
          <WinBtn $ml={16}><Ico n="cmd" s={18} /></WinBtn>
          <WinBtn $ml={26}><Square size={13} strokeWidth={1.6} /></WinBtn>
          <WinBtn $ml={15}><X size={16} strokeWidth={2} /></WinBtn>
        </TitleBar>
        <MenuBar>
          <MenuTab $w={109}><Ico n="mandant" s={20} />Mandant</MenuTab>
          <MenuTab $w={140} $on $pl={14}><Ico n="lohn" s={20} />Lohn &amp; Gehalt</MenuTab>
          <MenuTab $w={100}><Ico n="steuern" s={20} />Steuern</MenuTab>
          <MenuTab $w={93}><Ico n="online" s={20} />Online</MenuTab>
          <MenuTab $w={107} $pl={15}><Ico n="gear" s={19} />Erweitert</MenuTab>
          <MenuTab $w={108} $pl={15}><Ico n="berat" s={20} />Beratung</MenuTab>
          <MenuRight><Ico n="angerm" s={18} />ANGERMANN</MenuRight>
        </MenuBar>
        <Ribbon>
          <RGroupItem w={98} icon="listDown" label="Bearbeiten" cap="Vorgänge" />
          <RGroup $w={133}>
            <MonthCol>
              <MonthRow>
                <Ico n="left" c={B} s={14} />
                <MonthInput>02.2023</MonthInput>
                <Ico n="right" c={B} s={14} />
              </MonthRow>
              <SmallStack><Ico n="small1" s={15} /><Ico n="small2" s={15} /></SmallStack>
            </MonthCol>
            <RCaption>Abrechnungsmon<Launcher /></RCaption>
          </RGroup>
          <RGroupItem w={73} icon="play" label="Status" cap="Status" launcher s={22} />
          <RGroupItem w={108} icon="stamm" label="Stammdaten" cap="Stammdaten" />
          <RGroupItem w={89} icon="erfass" label="Erfassung" two={<>Import<LabelCaret /></>} cap="Erfassung" />
          <RGroup $w={89}><RIcon /><RLabel $up>Verarbeitung</RLabel><RArrow $mt={2} /></RGroup>
          <RGroup $w={52}><RIcon /><RLabel $up>Infos</RLabel><RArrow $mt={2} /></RGroup>
          <RGroupItem w={74} icon="tools" label="Extras" cap="Extras" />
          <RGroupItem w={73} icon="bfw" label="BFW" cap="BFW" />
          <RGroup $w={95}><RIcon /><RLabel $up>ADDISON</RLabel><RLabel $up>Lohn Online<LabelCaret /></RLabel></RGroup>
        </Ribbon>
        <Body>
          <Side>
            <SideTabs>
              <SideItem><Ico n="home" s={18} /></SideItem>
              <VSep $m={12} $h={20} $mb={2} />
              <SideItem $ml={-7} $w={51}><Ico n="akte" s={22} />Akte</SideItem>
              <SideActive><Ico n="bearb" s={21} />Bearbeitung</SideActive>
            </SideTabs>
            <SideBox>
              <SideBar>
                <Ico n="filter" s={19} /><Caret />
                <TbSlot $w={14} />
                <Ico n="first" s={19} />
                <TbSlot $w={40}><Ico n="left" c={G} s={16} /></TbSlot>
                <TbSlot $w={20}><Ico n="right" c={G} s={16} /></TbSlot>
                <VSep $h={24} $ml={8} $m={0} />
                <TbSlot $w={28} $ml={5}><Ico n="listPlay" s={19} /></TbSlot>
                <TbSlot $w={32}><Ico n="grayBox" s={19} /></TbSlot>
              </SideBar>
              <KHead>Kanzleiaufträge</KHead>
              <KRow>
                <KIcon><Ico n="first" s={19} /></KIcon>
                <KText>Kein Vorgang aktiv, zurück zur St...</KText>
              </KRow>
            </SideBox>
          </Side>
          <Main>
            <PTabs>
              <PTab><Ico n="lohn" s={17} />Personal</PTab>
              <PNav>
                <NavTri $w={20}><ChevronLeft size={13} strokeWidth={1.4} /></NavTri>
                <NavTri $w={18}><ChevronRight size={13} strokeWidth={1.4} /></NavTri>
                <NavTri $w={18}><ChevronDown size={13} strokeWidth={3} color="#444" /></NavTri>
                <NavTri $w={18}><X size={16} strokeWidth={2} color="#444" /></NavTri>
              </PNav>
            </PTabs>
            <MainInner>
              <Tools>
                {tools.map((t, i) => t === 0 ? <TSep key={i} /> : (
                  <TbSlot key={i} $w={t[1]}><Ico n={t[0]} c={t[3]} s={t[2]} /></TbSlot>
                ))}
                <ToolRight>
                  <ChevronsDown size={13} strokeWidth={1.2} />
                  <SmallDown />
                </ToolRight>
              </Tools>
              <FTabs>
                {ftabs.map((t, i) => <FTab key={i} $w={t[1]} $on={t[2]}>{t[0]}</FTab>)}
                <FTabScroll><ChevronLeft size={9} /><ChevronRight size={9} color="#333" /></FTabScroll>
              </FTabs>
              <MidRow>
                <FormBody>
                  <CapRow><Cap>Datum</Cap><Cap>Vers.</Cap><Cap>Status</Cap></CapRow>
                  <HeadRow>
                    <Txt $w={49} $ml={2}>Pers.Nr.</Txt>
                    <Field $w={64} $h={16} $r>1</Field>
                    <IcoBtn $ml={5} $w={18}><Ico n="binoc" s={11} /></IcoBtn>
                    <Field $w={214} $h={16} $ml={6} $grey>Schuster, Lieselotte</Field>
                    <Txt $w={47} $ml={48}>Abrech.</Txt>
                    <Field $w={50} $h={16}>03.2023</Field>
                    <Field $w={26} $h={16} $r>1</Field>
                    <IcoBtn $ml={3}><Ico n="binoc" s={11} /></IcoBtn>
                    <Field $w={66} $h={16} $ml={4} $grey>n.abger.</Field>
                  </HeadRow>
                  <Top>
                    <Col $w={377}>
                      <Panel $h={184} $pt={8}>
                        <Row $h={20}>
                          <Lab $w={109} $lh={22}>Anrede</Lab>
                          <Sel $w={112}><span /><Chev /></Sel>
                          <Check $s={16} $ml={12} />
                          <Txt $ml={3} $lh={14}>Geburtsangaben</Txt>
                        </Row>
                        <Row $h={22}>
                          <Lab $w={110} $lh={21}>Namenszusatz</Lab>
                          <Sel $w={112}><span /><Chev /></Sel>
                          <Sel $w={111}><span /><Chev /></Sel>
                        </Row>
                        <Row $h={20}>
                          <Lab $w={110} $lh={21}>Vorsatzwort</Lab>
                          <Sel $w={112} $h={20}><span /><Chev /></Sel>
                        </Row>
                        {[['Titel', '', 18], ['Vorname', 'Lieselotte', 18], ['Name', 'Schuster', 18], ['Straße / Hausnr.', 'Dokumentenstr. 1', 17], ['Anschriftenzusatz', '', 18]].map(([l, v, h]) => (
                          <Row $h={h} key={l}>
                            <Lab $w={109}>{l}</Lab>
                            <Field $w={259}>{v}</Field>
                          </Row>
                        ))}
                        <Row $h={16}>
                          <Lab $w={109}>Nation / PLZ / Ort</Lab>
                          <Field $w={34} />
                          <Field $w={55}>71636</Field>
                          <Field $w={170}>Ludwigsburg</Field>
                        </Row>
                      </Panel>
                      <Panel $h={220} $mt={5} $pt={10}>
                        <DateSplit>
                          <DateLeft>
                            {[['Geburtsdatum', '05.02.1972'], ['Eintrittsdatum', '01.01.2023', 1], ['Erst-Eintrittsdatum', ''], ['Austrittsdatum', '']].map(([l, v, g]) => (
                              <Row $h={l === 'Austrittsdatum' ? 16 : 19} key={l}>
                                <Lab $w={108} $pr={2}>{l}</Lab>
                                <Field $w={78} $r $grey={g}>{v}</Field>
                              </Row>
                            ))}
                          </DateLeft>
                          <DateRight>
                            <Txt>Alter: 51 Jahre und 2 Monate</Txt>
                            <BtnLine><Btn $w={155}>Kündigung / Entlassung</Btn><Radio $s={11} $ml={5} $g /></BtnLine>
                          </DateRight>
                        </DateSplit>
                        <BtnLine $mt={7} $ml={109}><Btn $w={240}>Aufenthaltsgen. / Arbeitserlaubnis / Immatrikulation</Btn><Radio $s={11} $ml={5} $g /></BtnLine>
                        <Checks>
                          <CheckLine $dim><Check $dim />Eintritt in Ruhestand oder Altersrentenbezug</CheckLine>
                          <CheckLine $dim $h={15}><Check $dim />bei Tod</CheckLine>
                          <CheckLine><Check />Ausschluss rückwirkende Abrechnung</CheckLine>
                          <CheckLine $dim><Check $dim />Weiterbeschäftigung bei Insolvenz</CheckLine>
                          <CheckLine $dim><Check $dim />Freistellung bei Insolvenz</CheckLine>
                        </Checks>
                      </Panel>
                    </Col>
                    <Col $w={234}>
                      <Panel $h={149} $pt={8}>
                        <Row $h={17}><Lab $w={103} $lh={16}>Abrechnungsgruppe</Lab><Field $w={68} /></Row>
                        <Row $h={19}><Lab $w={103}>Stammkostenstelle</Lab><Field $w={68} $grey /><IcoBtn $ml={3}><Ico n="mag" s={14} /></IcoBtn></Row>
                        <Row $h={20}><Lab $w={103}>Stammkostenträger</Lab><Field $w={68} $grey /><IcoBtn $ml={3}><Ico n="mag" s={14} /></IcoBtn></Row>
                        <Row $h={22}><Lab $w={103} $lh={20}>Abrechnungstyp</Lab><Sel $w={88}>0<Chev /></Sel></Row>
                        <Row $h={19}><Lab $w={103}>Buchungstyp</Lab><Field $w={68} $r>0</Field><IcoBtn $ml={3}><Ico n="binoc" s={11} /></IcoBtn></Row>
                        <Row $h={19}><Lab $w={103}>Lohnartentexttyp</Lab><Field $w={68} $r>0</Field><IcoBtn $ml={3}><Ico n="binoc" s={11} /></IcoBtn></Row>
                        <Row $h={16}><Lab $w={103}>Abteilung</Lab><Field $w={68} /><IcoBtn $ml={3}><Ico n="binoc" s={11} /></IcoBtn></Row>
                      </Panel>
                      <MidSplit>
                        <LeftStack>
                          <Panel $h={85} $w={108} $ml={1} $pt={5}>
                            <Legend>Geschlecht</Legend>
                            <RadioLine><Radio />männlich</RadioLine>
                            <RadioLine><Radio $on />weiblich</RadioLine>
                            <RadioLine><Radio />unbestimmt</RadioLine>
                            <RadioLine><Radio />divers</RadioLine>
                          </Panel>
                          <Panel $h={51} $w={108} $mt={18} $pt={11}>
                            <Legend>Familienstand</Legend>
                            <RadioLine $pl={10} $g={6}><Radio />verheiratet</RadioLine>
                            <RadioLine $pl={10} $g={6}><Radio $on />nicht verheiratet</RadioLine>
                          </Panel>
                        </LeftStack>
                        <PhotoCol>
                          <Photo />
                          <PhotoBtns>
                            <IcoBtn $w={18} $h={18}><Ico n="personBtn" s={15} /></IcoBtn>
                            <IcoBtn $w={18} $h={18}><Ico n="trash" s={13} /></IcoBtn>
                          </PhotoBtns>
                        </PhotoCol>
                      </MidSplit>
                      <Panel $h={70} $mt={8} $pt={5}>
                        <Legend>Beschäftigung</Legend>
                        <Row $h={18}><Lab $w={25} $pr={0}>Art</Lab><Field $w={186} $ml={9} /></Row>
                        <Row $h={23}><Lab $w={25} $pr={0}>Ort</Lab><Field $w={186} $ml={9} /></Row>
                        <Row $h={20}><Txt $ml={13} $w={121} $lh={20}>Art der Entlohnung (AAG)</Txt><Sel $w={93} $h={20}>keine<Chev /></Sel></Row>
                      </Panel>
                    </Col>
                  </Top>
                  <BottomRow>
                    <GridBox>
                      <GridMain>
                        <GridRow $head>
                          {['Kommunikationsart', 'Nummer / Adresse', 'Kurzwahl', 'Verwendung', 'Notiz / Bemerku'].map(h => <GCell $head key={h}>{h}</GCell>)}
                        </GridRow>
                        {gridRows.map((r, i) => (
                          <GridRow key={r} $alt={i % 2 === 0}>
                            <GCell>{r}</GCell><GCell /><GCell /><GCell>Privat</GCell><GCell />
                          </GridRow>
                        ))}
                      </GridMain>
                      <GridScroll>
                        <VEnd $h={20}><ChevronUp size={13} strokeWidth={2} /></VEnd>
                        <VEnd $h={19} $thumb />
                        <VEnd $h={82} />
                        <VEnd $h={14}><ChevronDown size={13} strokeWidth={2} /></VEnd>
                      </GridScroll>
                    </GridBox>
                    <SideIcons>
                      <SideIconBox $on><Ico n="listBtn" s={16} /></SideIconBox>
                      <SideIconBox><Ico n="sideB" s={17} /></SideIconBox>
                      <SideIconBox><Ico n="sideC" s={17} /></SideIconBox>
                      <SideIconBox><Ico n="sideD" s={17} /></SideIconBox>
                    </SideIcons>
                  </BottomRow>
                  <DelBox>
                    <Legend $l={9}>Datenlöschung</Legend>
                    <Txt $w={153}>Daten sollten gelöscht werden bis</Txt>
                    <Field $w={49} $h={16} $grey />
                    <Txt $ml={3} $w={62}>(MM.JJJJ)</Txt>
                    <Txt $w={140}>Daten tatsächlich gelöscht bis</Txt>
                    <Field $w={49} $h={16} $grey />
                    <Txt $ml={2}>(MM.JJJJ)</Txt>
                  </DelBox>
                </FormBody>
                <VScroll>
                  <VEnd $h={21}><ChevronUp size={13} strokeWidth={2} /></VEnd>
                  <VThumb />
                  <VEnd $h={26}><ChevronDown size={13} strokeWidth={2} /></VEnd>
                </VScroll>
              </MidRow>
              <HScroll>
                <HEnd $w={21}><ChevronLeft size={13} strokeWidth={2} /></HEnd>
                <HThumb />
                <HEnd $w={59}><ChevronRight size={13} strokeWidth={2} /></HEnd>
              </HScroll>
            </MainInner>
          </Main>
        </Body>
        <StatusL><Ico n="verb" s={20} />Verbunden mit ADDISON Online</StatusL>
      </LeftWin>

      <RightWin>
        <RTitle>
          <Ico n="globe" s={15} />
          <RTitleText>Mandant eDokumente</RTitleText>
          <RCtl><Minus size={12} strokeWidth={1.6} /></RCtl>
          <RCtl $ml={28}><Square size={11} strokeWidth={1.6} /></RCtl>
          <RCtl $ml={29}><X size={14} strokeWidth={1.2} /></RCtl>
        </RTitle>
        <RTabs>
          <RTab><Ico n="persZeit" s={13} />Personal &amp; Zeiten<X size={14} strokeWidth={1} /></RTab>
        </RTabs>
        <RHead>
          <Logo s={24} />
          <RHeadTitle>ADDISON Lohn Online</RHeadTitle>
          <Avatar><User size={19} strokeWidth={1.2} /></Avatar>
        </RHead>
        <RNav>
          <RNavItem><Ico n="book" s={20} />eDokumente</RNavItem>
        </RNav>
        <RBody>
          <H2>eDokumente</H2>
          <Cards>
            <Card $ml={21} $w={327} $hi $g={6}>
              <Ico n="relDoc" s={22} />
              <CardText><CardTitle>Relevant für die Lohn- und Gehaltsabrechnung</CardTitle><CardSub>4 Dokumente</CardSub></CardText>
            </Card>
            <Card $ml={36}>
              <Ico n="newDoc" s={21} />
              <CardText><CardTitle>Neu und unvollständig</CardTitle><CardSub>0 Dokumente</CardSub></CardText>
            </Card>
            <Card $ml={45}>
              <Ico n="ablage" s={21} />
              <CardText $left><CardTitle>Ablage</CardTitle><CardSub>7 Dokumente</CardSub></CardText>
            </Card>
            <Card $ml={46}>
              <Ico n="archiv" s={20} />
              <CardText $left><CardTitle>Archiv</CardTitle><CardSub>0 Dokumente</CardSub></CardText>
            </Card>
          </Cards>
          <Tools2>
            <SearchBox>Suche (Bezeichnung, Be...<Search size={14} strokeWidth={1.3} color="#444" /></SearchBox>
            <Primary>Aktualisieren</Primary>
            <GearWrap><Settings size={16} strokeWidth={1.4} /></GearWrap>
          </Tools2>
          <Filters>
            <FCol $w={89}><FLabel>Arbeitn...</FLabel><FVal>Bitte au...</FVal></FCol>
            <FCol $w={65}><FLabel>Kate...</FLabel><FVal>Alle</FVal></FCol>
            <FCol $w={89}><FLabel>Dokume...</FLabel><FVal>Alle</FVal></FCol>
            <FCol $w={93}><FLabel>Bereitge...</FLabel><FVal>Alle</FVal></FCol>
            <FCol $w={192}><FLabel>Relevant für die Lohn-...</FLabel><FVal>Alle</FVal></FCol>
            <More>
              <MoreLine>Weitere</MoreLine>
              <MoreLine>Filter</MoreLine>
              <MoreLine><ChevronDown size={14} strokeWidth={1.2} /></MoreLine>
            </More>
            <Pager>
              <PagerText>Seiten blättern 1-4 / 4</PagerText>
              <PagerBtn><ChevronsLeft size={18} strokeWidth={1.2} /></PagerBtn>
              <PagerBtn><ChevronLeft size={18} strokeWidth={1.2} /></PagerBtn>
              <PagerBtn><ChevronRight size={18} strokeWidth={1.2} /></PagerBtn>
              <PagerBtn><ChevronsRight size={18} strokeWidth={1.2} /></PagerBtn>
            </Pager>
          </Filters>
          <Table>
            <THead>
              <TH $w={cols[0]} $r>Personal-Nr.</TH>
              <TH $w={cols[1]}>Arbeitneh...</TH>
              <TH $w={cols[2]}>Bezeichnu...</TH>
              <TH $w={cols[3]}>Beschreibung</TH>
              <TH $w={cols[4]}>Relevant für d...</TH>
              <TH $w={cols[5]}>Kategorie</TH>
              <TH $w={67}>Dokument</TH>
            </THead>
            <TBodyWrap>
              <TBody>
                {rows.map((r, i) => (
                  <TR key={i}>
                    <TD $w={cols[0]} $r>{r[0]}</TD>
                    <TD $w={cols[1]}>{r[1]}</TD>
                    <TD $w={cols[2]}>{r[2]}</TD>
                    <TD $w={cols[3]} />
                    <TD $w={cols[4]}><Badge>OFFEN</Badge></TD>
                    <TD $w={cols[5]}>Verträge</TD>
                    <TD $w={65}>{r[3]}</TD>
                  </TR>
                ))}
              </TBody>
              <TV><Tri $up /><Tri /></TV>
            </TBodyWrap>
            <TH2><THThumb /></TH2>
          </Table>
          <RStatus>
            <Ico n="expand" s={13} />
            <Ico n="split2" s={14} />
            <Ico n="split" s={14} />
            <Slider>
              <Minus size={15} strokeWidth={1.2} />
              <SlBar $w={32} $c="#0a6fb5" $ml={2} />
              <SlThumb />
              <SlBar $w={29} $c="#a0a0a0" />
              <Plus size={15} strokeWidth={1.2} />
              <Zoom>100%</Zoom>
              <SearchEnd><Search size={14} strokeWidth={1.2} /></SearchEnd>
            </Slider>
          </RStatus>
        </RBody>
      </RightWin>
    </Page>
  );
}
